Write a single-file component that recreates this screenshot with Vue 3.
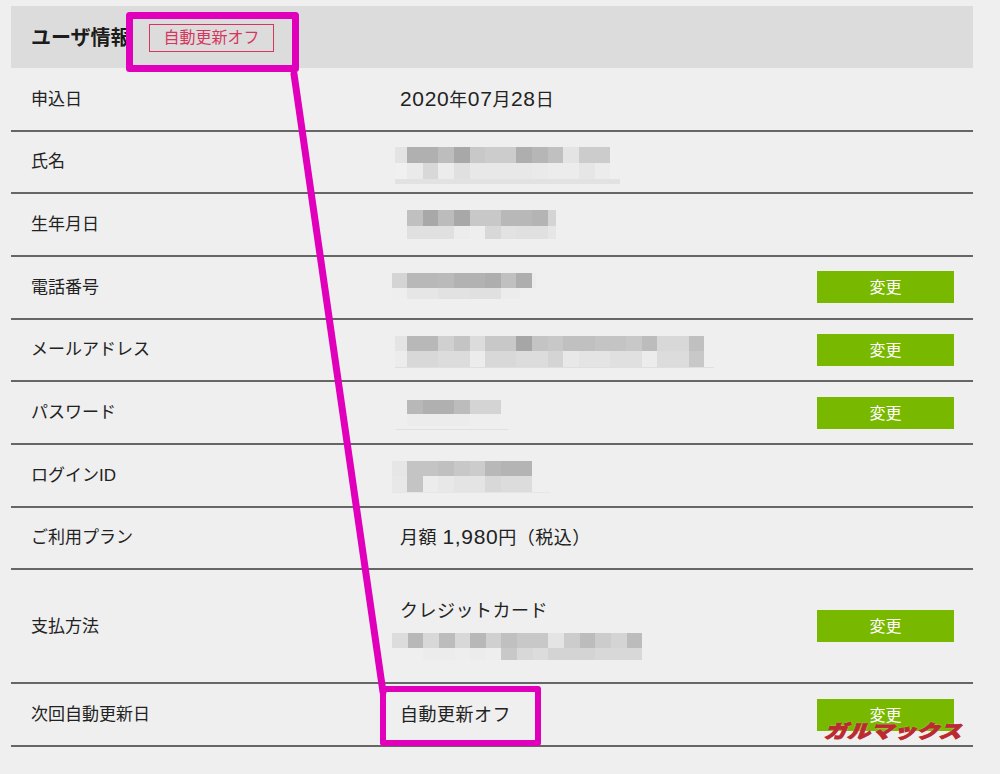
<script setup>
// モザイクの1マスは約15.65px四方
const rows = [
  { label: "申込日", value: "2020年07月28日" },
  {
    label: "氏名",
    mosaic: {
      x: 395, y: 15, first: 12, strip: { w: 225, h: 5, c: "#e2e2e2" },
      lines: [
        { h: 16, c: ["e3", "b0", "b0", "bd", "a8", "c8", "cc", "cc", "ae", "b6", "c0", "e4", "cc", "cc"] },
        { h: 16, c: ["f0", "ea", "d8", "ec", "e0", "e8", "e8", "e8", "e8", "ea", "ec", "ec", "e6", "ec"] },
      ],
    },
  },
  {
    label: "生年月日",
    mosaic: {
      x: 407, y: 16, first: 15.65, last: 8,
      lines: [
        { h: 16, c: ["c0", "a8", "bc", "a8", "c8", "c8", "b8", "b8", "b4", "d4"] },
        { h: 13, c: ["e0", "e0", "e0", "ec", "ee", "d8", "e2", "e0", "e0", "e6"] },
      ],
    },
  },
  {
    label: "電話番号",
    button: true,
    mosaic: {
      x: 392, y: 16, first: 15, last: 4,
      lines: [
        { h: 15, c: ["d4", "b8", "b8", "ba", "b2", "b2", "ae", "c0", "ae", "ec"] },
        { h: 11, c: ["ee", "e6", "e6", "e2", "e2", "e0", "e0", "ec", "ec"] },
      ],
    },
  },
  {
    label: "メールアドレス",
    button: true,
    mosaic: {
      x: 395, y: 16, first: 12, strip: { w: 319, h: 1, c: "#dfdfdf" },
      lines: [
        { h: 15, c: ["e4", "b8", "b8", "d0", "c4", "dc", "c8", "c8", "a6", "c4", "c8", "c0", "c0", "c4", "c4", "c8", "bc", "d8", "d8", "c0"] },
        { h: 16, c: ["ec", "d8", "d8", "dc", "dc", "ec", "d8", "d8", "dc", "dc", "d4", "e8", "e4", "e4", "e0", "e0", "ec", "dc", "dc", "c8"] },
      ],
    },
  },
  {
    label: "パスワード",
    button: true,
    mosaic: {
      x: 396, y: 18, first: 11, stripGap: 3, strip: { w: 112, h: 1, c: "#e0e0e0" },
      lines: [
        { h: 14, c: ["ef", "b8", "b0", "b0", "bc", "d4", "d4"] },
        { h: 12, c: ["ef", "ec", "ec", "ec", "ec", "ee", "ee"] },
      ],
    },
  },
  {
    label: "ログインID",
    mosaic: {
      x: 392, y: 16, first: 15, strip: { w: 158, h: 1, c: "#e6e6e6" },
      lines: [
        { h: 15, c: ["e6", "c4", "c4", "c0", "c8", "cc", "b8", "b4", "b4"] },
        { h: 16, c: ["e8", "c4", "ec", "e8", "e4", "e4", "d8", "dc", "dc"] },
      ],
    },
  },
  { label: "ご利用プラン", value: "月額 1,980円（税込）" },
  {
    label: "支払方法",
    button: true,
    tall: true,
    value: "クレジットカード",
    mosaic: {
      x: 392, first: 15.65,
      lines: [
        { h: 15, c: ["dc", "b8", "d8", "bc", "d8", "b8", "d0", "c0", "c8", "c8", "e4", "cc", "bc", "cc", "d4", "bc"] },
        { h: 12, c: ["ef", "ef", "ec", "ec", "ee", "ec", "ee", "c8", "d8", "dc", "d4", "d4", "d4", "d8", "d8", "d8"] },
      ],
    },
  },
  { label: "次回自動更新日", value: "自動更新オフ", button: true },
];

const cellStyle = (mosaic, line, index, color) => {
  let width = 15.65;
  if (index === 0) width = mosaic.first;
  else if (mosaic.last && index === line.c.length - 1) width = mosaic.last;
  return { width: `${width}px`, background: `#${color}${color}${color}` };
};

// 値の列は x=400 から始まるので、その差だけずらす
const mosaicStyle = (mosaic) => ({
  marginLeft: `${mosaic.x - 400}px`,
  marginTop: mosaic.y ? `${mosaic.y}px` : "9px",
});

// 数字だけ少し大きく見えるので分けておく
const splitValue = (value) =>
  value.split(/([0-9,]+)/).filter(Boolean).map((text) => ({
    text,
    num: /^[0-9,]+$/.test(text),
  }));
</script>

<template>
  <div class="page">
    <div class="user-info">
      <div class="head">
        <h2>ユーザ情報</h2>
        <span class="status">自動更新オフ</span>
      </div>

      <div v-for="row in rows" :key="row.label" class="row" :class="{ tall: row.tall }">
        <div class="label">{{ row.label }}</div>
        <div class="value" :class="{ top: row.mosaic && !row.value }">
          <p v-if="row.value">
            <span
              v-for="(part, i) in splitValue(row.value)"
              :key="i"
              :class="{ num: part.num }"
              >{{ part.text }}</span
            >
          </p>
          <div v-if="row.mosaic" class="mosaic" :style="mosaicStyle(row.mosaic)">
            <div
              v-for="(line, i) in row.mosaic.lines"
              :key="i"
              class="mosaic-line"
              :style="{ height: `${line.h}px` }"
            >
              <span
                v-for="(color, j) in line.c"
                :key="j"
                :style="cellStyle(row.mosaic, line, j, color)"
              ></span>
            </div>
            <div
              v-if="row.mosaic.strip"
              :style="{
                width: `${row.mosaic.strip.w}px`,
                height: `${row.mosaic.strip.h}px`,
                marginTop: `${row.mosaic.stripGap || 0}px`,
                background: row.mosaic.strip.c,
              }"
            ></div>
          </div>
        </div>
        <button v-if="row.button" type="button" class="change">変更</button>
      </div>
    </div>

    <!-- 注釈 -->
    <svg class="marks" width="1000" height="774" viewBox="0 0 1000 774" aria-hidden="true">
      <g fill="none" stroke="#e000bb" stroke-linejoin="round">
        <rect x="129.5" y="15.5" width="166" height="53" stroke-width="7" />
        <path d="M294 74 L383 692" stroke-width="7" stroke-linecap="round" />
        <rect x="383" y="689" width="155" height="54" stroke-width="6" />
      </g>
    </svg>
    <div class="watermark">ガルマックス</div>
  </div>
</template>

<style>
html,
body {
  margin: 0;
  background: #efefef;
  overflow: hidden;
}
</style>

<style scoped>
.page {
  position: relative;
  width: 1000px;
  height: 774px;
  padding: 6px 27px 0 11px;
  box-sizing: border-box;
  background: #efefef;
  color: #222;
  font-family: "Liberation Sans", "Noto Sans CJK JP", sans-serif;
  overflow: hidden;
}
.head {
  display: flex;
  align-items: center;
  height: 62px;
  margin-bottom: 1px;
  padding-left: 20px;
  background: #dcdcdc;
}
.head h2 {
  width: 118px;
  margin: 0 0 2px;
  font-size: 20px;
  font-weight: 700;
  white-space: nowrap;
  color: #1c1c1c;
}
.status {
  width: 125px;
  height: 28px;
  margin-top: 1px;
  line-height: 26px;
  box-sizing: border-box;
  border: 1px solid #d6365c;
  text-align: center;
  font-size: 16px;
  color: #d6365c;
}
.row {
  display: flex;
  align-items: center;
  height: 62.67px;
  padding: 0 19px 0 20px;
  box-sizing: border-box;
  border-bottom: 2px solid #666;
}
.row.tall {
  height: 114px;
}
.label {
  width: 369px;
  flex-shrink: 0;
  margin-bottom: 4px;
  font-size: 17px;
}
.value {
  flex: 1;
  font-size: 18px;
}
.value.top {
  align-self: flex-start;
}
.row.tall .value {
  padding-top: 6px;
}
.value p {
  margin: 0;
  line-height: 26px;
  letter-spacing: 0.5px;
}
.num {
  font-size: 21px;
  letter-spacing: 0.65px;
}
.mosaic {
  filter: blur(0.6px);
}
.mosaic-line {
  display: flex;
}
.mosaic-line span {
  flex-shrink: 0;
  height: 100%;
}
.change {
  width: 137px;
  height: 32px;
  padding: 0 0 2px;
  border: 0;
  background: #78b900;
  color: #fff;
  font-family: inherit;
  font-size: 16px;
}
.marks {
  position: absolute;
  top: 0;
  left: 0;
  pointer-events: none;
}
.watermark {
  position: absolute;
  top: 717px;
  left: 826px;
  width: 137px;
  font-size: 23px;
  font-weight: 900;
  line-height: 30px;
  white-space: nowrap;
  color: #bb2a30;
  -webkit-text-stroke: 1.2px #bb2a30;
  text-shadow: 0 0 2px rgba(255, 255, 255, 0.8);
  transform: skewX(-20deg) scaleY(0.8);
}
</style>
